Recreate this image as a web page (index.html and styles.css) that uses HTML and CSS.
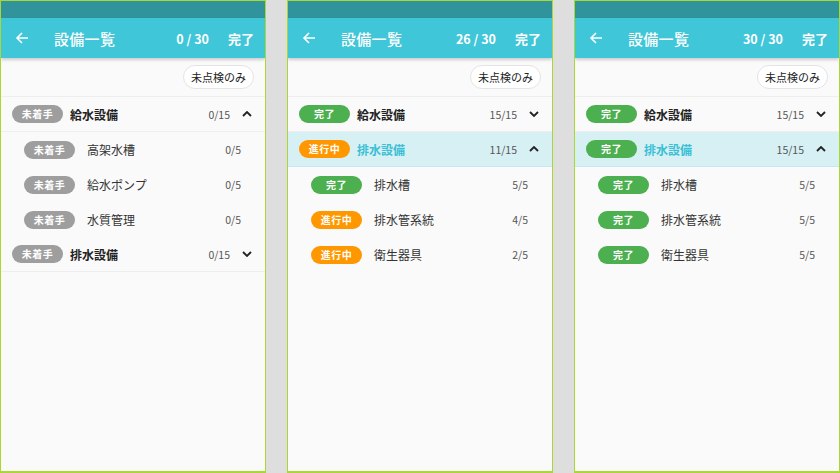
FILE: index.html
```html
<!DOCTYPE html>
<html lang="ja">
<head>
  <meta charset="UTF-8">
  <title>設備一覧</title>
  <link rel="stylesheet" href="styles.css">
</head>
<body>

<div class="screens">

  <!-- 点検前 -->
  <div class="phone">
    <div class="status"></div>
    <div class="appbar">
      <svg class="back" width="14" height="14" viewBox="0 0 14 14"><path d="M13 7H2M7 2L2 7l5 5" fill="none" stroke="#fff" stroke-width="1.6"/></svg>
      <div class="title">設備一覧</div>
      <div class="count">0 / 30</div>
      <div class="done">完了</div>
    </div>
    <div class="filter"><span class="chip">未点検のみ</span></div>

    <div class="group">
      <span class="badge gray">未着手</span>
      <span class="gname">給水設備</span>
      <span class="gcount">0/15</span>
      <svg class="chev" width="10" height="6" viewBox="0 0 10 6"><path d="M1 5l4-4 4 4" fill="none" stroke="#222" stroke-width="1.8"/></svg>
    </div>
    <div class="item"><span class="badge gray">未着手</span><span class="iname">高架水槽</span><span class="icount">0/5</span></div>
    <div class="item"><span class="badge gray">未着手</span><span class="iname">給水ポンプ</span><span class="icount">0/5</span></div>
    <div class="item"><span class="badge gray">未着手</span><span class="iname">水質管理</span><span class="icount">0/5</span></div>
    <div class="group">
      <span class="badge gray">未着手</span>
      <span class="gname">排水設備</span>
      <span class="gcount">0/15</span>
      <svg class="chev" width="10" height="6" viewBox="0 0 10 6"><path d="M1 1l4 4 4-4" fill="none" stroke="#222" stroke-width="1.8"/></svg>
    </div>
  </div>

  <!-- 点検中 -->
  <div class="phone">
    <div class="status"></div>
    <div class="appbar">
      <svg class="back" width="14" height="14" viewBox="0 0 14 14"><path d="M13 7H2M7 2L2 7l5 5" fill="none" stroke="#fff" stroke-width="1.6"/></svg>
      <div class="title">設備一覧</div>
      <div class="count">26 / 30</div>
      <div class="done">完了</div>
    </div>
    <div class="filter"><span class="chip">未点検のみ</span></div>

    <div class="group">
      <span class="badge green">完了</span>
      <span class="gname">給水設備</span>
      <span class="gcount">15/15</span>
      <svg class="chev" width="10" height="6" viewBox="0 0 10 6"><path d="M1 1l4 4 4-4" fill="none" stroke="#222" stroke-width="1.8"/></svg>
    </div>
    <div class="group open">
      <span class="badge orange">進行中</span>
      <span class="gname">排水設備</span>
      <span class="gcount">11/15</span>
      <svg class="chev" width="10" height="6" viewBox="0 0 10 6"><path d="M1 5l4-4 4 4" fill="none" stroke="#222" stroke-width="1.8"/></svg>
    </div>
    <div class="item"><span class="badge green">完了</span><span class="iname">排水槽</span><span class="icount">5/5</span></div>
    <div class="item"><span class="badge orange">進行中</span><span class="iname">排水管系統</span><span class="icount">4/5</span></div>
    <div class="item"><span class="badge orange">進行中</span><span class="iname">衛生器具</span><span class="icount">2/5</span></div>
  </div>

  <!-- 点検完了 -->
  <div class="phone">
    <div class="status"></div>
    <div class="appbar">
      <svg class="back" width="14" height="14" viewBox="0 0 14 14"><path d="M13 7H2M7 2L2 7l5 5" fill="none" stroke="#fff" stroke-width="1.6"/></svg>
      <div class="title">設備一覧</div>
      <div class="count">30 / 30</div>
      <div class="done">完了</div>
    </div>
    <div class="filter"><span class="chip">未点検のみ</span></div>

    <div class="group">
      <span class="badge green">完了</span>
      <span class="gname">給水設備</span>
      <span class="gcount">15/15</span>
      <svg class="chev" width="10" height="6" viewBox="0 0 10 6"><path d="M1 1l4 4 4-4" fill="none" stroke="#222" stroke-width="1.8"/></svg>
    </div>
    <div class="group open">
      <span class="badge green">完了</span>
      <span class="gname">排水設備</span>
      <span class="gcount">15/15</span>
      <svg class="chev" width="10" height="6" viewBox="0 0 10 6"><path d="M1 5l4-4 4 4" fill="none" stroke="#222" stroke-width="1.8"/></svg>
    </div>
    <div class="item"><span class="badge green">完了</span><span class="iname">排水槽</span><span class="icount">5/5</span></div>
    <div class="item"><span class="badge green">完了</span><span class="iname">排水管系統</span><span class="icount">5/5</span></div>
    <div class="item"><span class="badge green">完了</span><span class="iname">衛生器具</span><span class="icount">5/5</span></div>
  </div>

</div>

</body>
</html>
```

FILE: styles.css
```css
body {
  margin: 0;
  background-color: #dedede;
  font-family: "Noto Sans CJK JP", "Noto Sans", sans-serif;
}

.screens {
  display: flex;
  gap: 21px;
  height: 473px;
}

.phone {
  width: 266px;
  height: 473px;
  box-sizing: border-box;
  border: 1px solid #a9d833;
  border-bottom-width: 2px;
  background: #fafafa;
  overflow: hidden;
}

.status {
  height: 17px;
  background: #31939b;
}

.appbar {
  position: relative;
  z-index: 1;
  height: 40px;
  background: #3fc6d8;
  box-shadow: 0 2px 3px rgba(0, 0, 0, 0.18);
  display: flex;
  align-items: center;
  padding: 0 11px 0 14px;
  color: #fff;
}

.back {
  margin-right: 25px;
}

.title {
  font-size: 15px;
  font-weight: 500;
  letter-spacing: 0.3px;
  flex: 1;
}

.count {
  font-size: 12.5px;
  font-weight: bold;
  margin-right: 19px;
}

.done {
  font-size: 13px;
  font-weight: bold;
}

.filter {
  height: 38px;
  display: flex;
  justify-content: flex-end;
  align-items: center;
  padding-right: 11px;
  border-bottom: 1px solid #eeeeee;
}

.chip {
  height: 22px;
  line-height: 22px;
  padding: 0 7px;
  border: 1px solid #e4e4e4;
  border-radius: 12px;
  background: #fff;
  font-size: 11px;
  color: #222;
}

.group {
  height: 34px;
  display: flex;
  align-items: center;
  padding: 0 13px 0 11px;
  border-bottom: 1px solid #eeeeee;
}

.group.open {
  background: #d6f0f4;
  border-bottom-color: #c9e8ed;
}

.badge {
  width: 51px;
  height: 18px;
  line-height: 18px;
  border-radius: 9px;
  text-align: center;
  color: #fff;
  font-size: 10px;
  font-weight: bold;
  letter-spacing: 0.5px;
  flex-shrink: 0;
}

.gray { background: #9e9e9e; }
.green { background: #4caf50; }
.orange { background: #ff9800; }

.gname {
  margin-left: 7px;
  font-size: 12px;
  font-weight: bold;
  color: #222;
  flex: 1;
}

.group.open .gname {
  color: #3bbfd5;
}

.gcount {
  font-size: 10.5px;
  color: #555;
  margin-right: 12px;
}

.item {
  height: 35px;
  display: flex;
  align-items: center;
  padding: 0 24px 0 23px;
}

.iname {
  margin-left: 12px;
  font-size: 12px;
  color: #333;
  flex: 1;
}

.icount {
  font-size: 10.5px;
  color: #555;
}
```
